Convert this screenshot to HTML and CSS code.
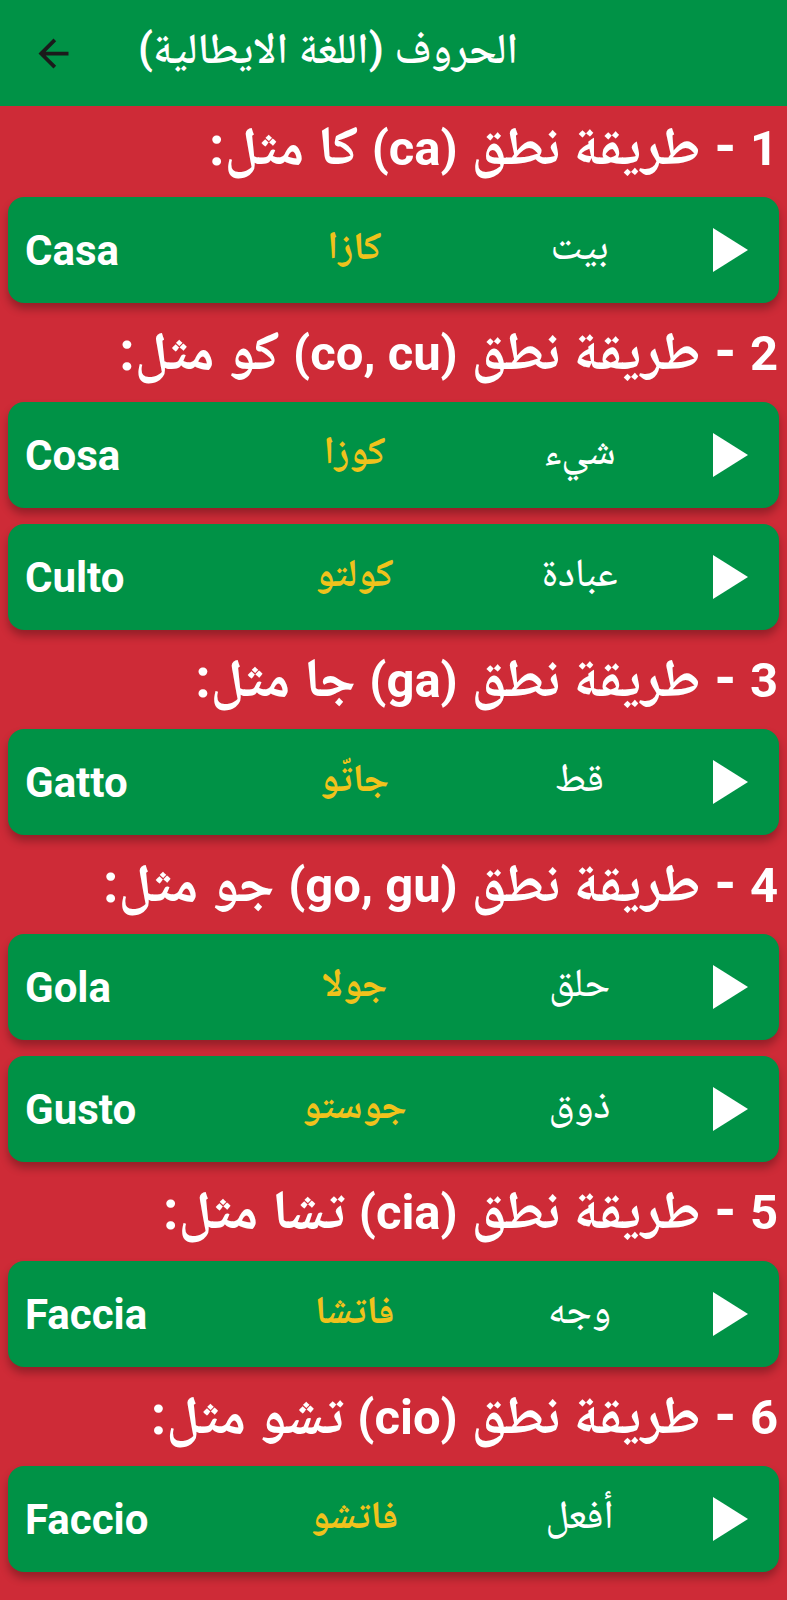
FILE: index.html
```html
<!DOCTYPE html>
<html lang="ar" dir="rtl">
<head>
<meta charset="utf-8">
<title>الحروف (اللغة الايطالية)</title>
<link rel="stylesheet" href="styles.css">
</head>
<body>
<header class="appbar">
  <svg class="back" viewBox="0 0 24 24" aria-hidden="true"><path d="M20 11H7.83l5.59-5.59L12 4l-8 8 8 8 1.41-1.41L7.83 13H20v-2z"/></svg>
  <h1 class="appbar-title">الحروف (اللغة الايطالية)</h1>
</header>
<main class="list">
  <h2 class="section"><span class="lat">1</span> - طريقة نطق <span class="lat">(ca)</span> كا مثل:</h2>
  <div class="card"><span class="play"></span><span class="meaning">بيت</span><span class="translit">كازا</span><span class="word">Casa</span></div>

  <h2 class="section"><span class="lat">2</span> - طريقة نطق <span class="lat">(co, cu)</span> كو مثل:</h2>
  <div class="card"><span class="play"></span><span class="meaning">شيء</span><span class="translit">كوزا</span><span class="word">Cosa</span></div>
  <div class="card"><span class="play"></span><span class="meaning">عبادة</span><span class="translit">كولتو</span><span class="word">Culto</span></div>

  <h2 class="section"><span class="lat">3</span> - طريقة نطق <span class="lat">(ga)</span> جا مثل:</h2>
  <div class="card"><span class="play"></span><span class="meaning">قط</span><span class="translit">جاتّو</span><span class="word">Gatto</span></div>

  <h2 class="section"><span class="lat">4</span> - طريقة نطق <span class="lat">(go, gu)</span> جو مثل:</h2>
  <div class="card"><span class="play"></span><span class="meaning">حلق</span><span class="translit">جولا</span><span class="word">Gola</span></div>
  <div class="card"><span class="play"></span><span class="meaning">ذوق</span><span class="translit">جوستو</span><span class="word">Gusto</span></div>

  <h2 class="section"><span class="lat">5</span> - طريقة نطق <span class="lat">(cia)</span> تشا مثل:</h2>
  <div class="card"><span class="play"></span><span class="meaning">وجه</span><span class="translit">فاتشا</span><span class="word">Faccia</span></div>

  <h2 class="section"><span class="lat">6</span> - طريقة نطق <span class="lat">(cio)</span> تشو مثل:</h2>
  <div class="card"><span class="play"></span><span class="meaning">أفعل</span><span class="translit">فاتشو</span><span class="word">Faccio</span></div>

  <h2 class="section"><span class="lat">7</span> - طريقة نطق <span class="lat">(ciu)</span> تشو مثل:</h2>
</main>
</body>
</html>
```
FILE: styles.css
```css
html, body {
  margin: 0;
  padding: 0;
}
body {
  background: #ce2b37;
  font-family: Roboto, "Noto Naskh Arabic", "Noto Sans Arabic", "DejaVu Sans", sans-serif;
  color: #fff;
  overflow: hidden;
  height: 1600px;
}
.appbar {
  direction: ltr;
  height: 106px;
  background: #009246;
  display: flex;
  align-items: center;
  box-sizing: border-box;
  padding-left: 31px;
}
.back {
  width: 45px;
  height: 45px;
  fill: #1b1b1b;
  flex: none;
}
.appbar-title {
  margin: 0 0 0 62px;
  font-size: 43px;
  font-weight: 600;
  direction: rtl;
  color: #fff;
}
.list {
  display: flex;
  flex-direction: column;
}
.section {
  margin: 0;
  height: 83px;
  box-sizing: border-box;
  padding: 6px 9px 0 0;
  font-size: 55px;
  font-weight: 700;
  line-height: 68px;
  white-space: nowrap;
  color: #fff;
}
.lat {
  font-size: 49px;
}
.card {
  margin: 8px 8px;
  height: 106px;
  box-sizing: border-box;
  background: #009246;
  border-radius: 16px;
  box-shadow: 0 6px 8px rgba(0, 0, 0, 0.28);
  display: grid;
  grid-template-columns: 56px 225px 225px 1fr;
  align-items: center;
  padding: 0 31px 0 17px;
}
.play {
  width: 0;
  height: 0;
  border-top: 22px solid transparent;
  border-bottom: 22px solid transparent;
  border-left: 35px solid #fff;
  justify-self: start;
}
.meaning {
  text-align: center;
  font-size: 40px;
  font-weight: 500;
}
.translit {
  text-align: center;
  font-size: 39px;
  font-weight: 700;
  color: #f0c21c;
}
.word {
  direction: ltr;
  text-align: left;
  font-size: 42px;
  font-weight: 700;
}
```
